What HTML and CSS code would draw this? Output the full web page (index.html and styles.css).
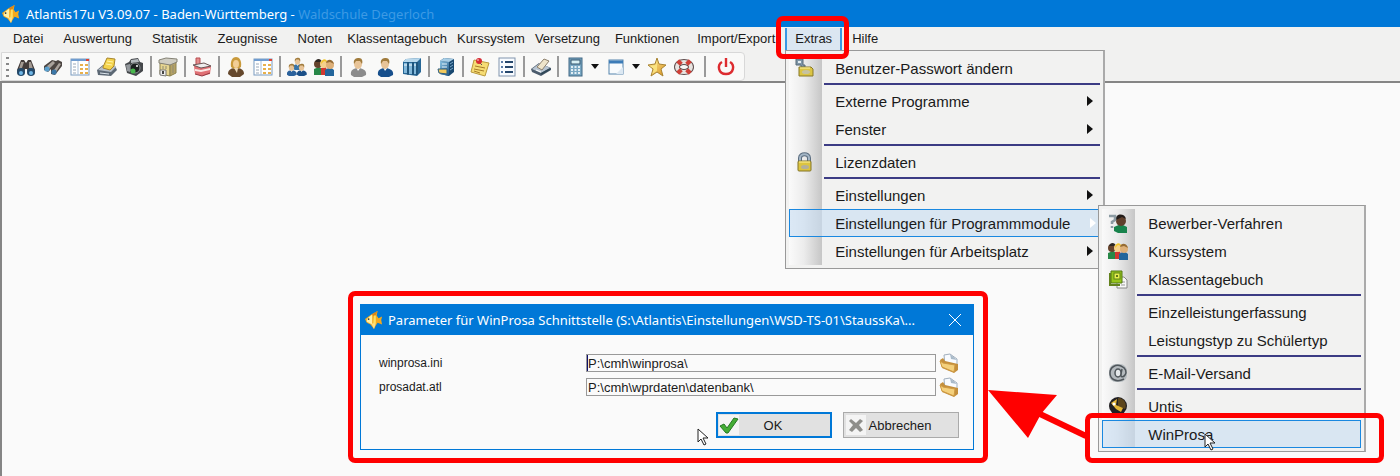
FILE: index.html
```html
<!DOCTYPE html>
<html lang="de">
<head>
  <meta charset="UTF-8">
  <title>Atlantis17u</title>
  <link rel="stylesheet" href="styles.css">
</head>
<body>
  <!-- shared icons -->
  <svg class="icon-defs" width="0" height="0" aria-hidden="true">
    <defs>
      <linearGradient id="gold" x1="0" y1="0" x2="1" y2="1">
        <stop offset="0" stop-color="#fff2a0"/>
        <stop offset="1" stop-color="#d9901c"/>
      </linearGradient>
      <linearGradient id="blue" x1="0" y1="0" x2="1" y2="1">
        <stop offset="0" stop-color="#8cc4e4"/>
        <stop offset="1" stop-color="#1c5484"/>
      </linearGradient>
      <symbol id="fish" viewBox="0 0 20 20">
        <path d="M0 9L7 4L14 0L13 5L15 8L19 6L18 10L19 15L14 13L12 16L10 20L6 15L2 13Z" fill="#f4a91c"/>
        <path d="M7 4L14 0L11 6Z" fill="#d8861a"/>
        <path d="M2 9L8 4L8 15L2 12Z" fill="#fff0a8"/>
        <path d="M10 5L12 5L12 14L9 15Z" fill="#ffdf60"/>
        <path d="M7 14L10 20L12 14Z" fill="#fbe08a"/>
        <circle cx="4" cy="9" r="1" fill="#333"/>
      </symbol>
      <symbol id="person" viewBox="0 0 20 20">
        <path d="M3 18C2 13 6 11 10 11S19 13 18 18L14 20H6Z" fill="currentColor"/>
        <path d="M8 10L10 14L13 10Z" fill="#fff"/>
        <ellipse cx="10" cy="7" rx="4" ry="5" fill="#e8c498"/>
        <path d="M6 7C5 2 8 1 11 1S15 4 14 7L12 4L8 4Z" fill="#a07b3c"/>
      </symbol>
      <symbol id="binoculars" viewBox="0 0 20 20">
        <path d="M5 3L8 3L10 6L12 3L15 3L19 13L18 18L12 18L11 12L9 12L8 18L2 18L1 13Z" fill="#443c3a"/>
        <path d="M5 5L8 5L6 11L3 12ZM13 5L15 5L17 12L13 11Z" fill="#a39a92"/>
        <circle cx="5" cy="15" r="4" fill="#24496a"/>
        <circle cx="15" cy="15" r="4" fill="#24496a"/>
        <circle cx="5" cy="16" r="2" fill="#6fb6e6"/>
        <circle cx="15" cy="16" r="2" fill="#6fb6e6"/>
      </symbol>
      <symbol id="binoculars-tilt" viewBox="0 0 20 20">
        <path d="M1 9L9 3L13 4L15 3L19 5L19 9L12 18L8 17L8 12L5 15L1 13Z" fill="#4c4642"/>
        <path d="M4 9L10 4L12 6L6 12ZM11 13L16 6L18 7L13 15Z" fill="#aaa39c"/>
        <circle cx="4" cy="12" r="2.6" fill="#5b9fcc"/>
        <circle cx="11" cy="15" r="2.6" fill="#3c78a8"/>
      </symbol>
      <symbol id="form" viewBox="0 0 20 20">
        <rect x="1" y="2" width="18" height="16" fill="#fff" stroke="#7b9cc0"/>
        <path d="M1 3H19" stroke="#6f9cd0" stroke-width="2"/>
        <path d="M16 3H19" stroke="#e04030" stroke-width="2"/>
        <path d="M8 4V18" stroke="#aac0d8"/>
        <path d="M3 7H6M3 10H6M3 13H6M3 16H6" stroke="#9aa8b8"/>
        <path d="M10 8H13M15 8H18M10 12H13M15 12H18M10 16H13M15 16H18" stroke="#e8b04c" stroke-width="2"/>
      </symbol>
      <symbol id="printer" viewBox="0 0 20 20">
        <path d="M0 13L6 8L18 9L20 13L14 19L1 18Z" fill="#5c6874"/>
        <path d="M1 13L14 15L19 10L18 9L7 8Z" fill="#b6bec8"/>
        <path d="M6 10L10 1L18 2L17 9L13 13L6 11Z" fill="#f4d34c" stroke="#a8862c"/>
        <path d="M10 4L16 5M9 7L15 8" stroke="#fff3a8"/>
        <path d="M3 16L12 17" stroke="#dfe7ee"/>
      </symbol>
      <symbol id="camera" viewBox="0 0 20 20">
        <path d="M1 7L5 5L7 2L14 1L16 5L19 6L19 14L12 19L3 16Z" fill="#45484b"/>
        <path d="M7 3L14 2L15 5L7 6Z" fill="#b5babe"/>
        <path d="M2 8L6 7L6 15L3 14Z" fill="#94999d"/>
        <circle cx="11" cy="11" r="5" fill="#1c1f20" stroke="#8a8f92"/>
        <circle cx="9" cy="14" r="2.5" fill="#48b84c"/>
        <circle cx="13" cy="9" r="1" fill="#fff"/>
      </symbol>
      <symbol id="school" viewBox="0 0 20 20">
        <path d="M2 6L12 7L12 19L2 17Z" fill="#e6d590" stroke="#8d8350"/>
        <path d="M12 7L18 5V16L12 19Z" fill="#b5a266" stroke="#8d8350"/>
        <path d="M1 3L8 1L19 2V5L12 8L1 6Z" fill="#d0cec4" stroke="#858275"/>
        <path d="M5 9V12M8 9V12M15 8V16" stroke="#8f8b74"/>
        <path d="M2 13H8V19L2 18Z" fill="#eee" stroke="#777"/>
        <path d="M5 14V17" stroke="#444" stroke-width="2"/>
      </symbol>
      <symbol id="factory" viewBox="0 0 20 20">
        <path d="M4 1H8V9H4Z" fill="#e48c8c" stroke="#b84c50"/>
        <path d="M2 9L14 7L19 9L18 17L10 19L3 17Z" fill="#e07074"/>
        <path d="M1 8L12 6L19 9L9 11Z" fill="#eee" stroke="#6b5555"/>
        <path d="M3 12L9 13L18 11V13L9 15L3 14Z" fill="#fbe9e6"/>
        <path d="M3 17L10 19L18 16" fill="none" stroke="#943840"/>
      </symbol>
      <symbol id="woman" viewBox="0 0 20 20">
        <path d="M2 17C2 12 6 11 10 11S18 12 18 17L14 20H6Z" fill="#65482c"/>
        <path d="M5 10C4 3 7 0 10 0S16 3 15 10L12 12H8Z" fill="#c99a3c"/>
        <ellipse cx="10" cy="7" rx="3" ry="4" fill="#f2ce96"/>
        <path d="M8 11H12L11 16Z" fill="#ead8b8"/>
      </symbol>
      <symbol id="group" viewBox="0 0 20 20">
        <use href="#person" x="4" y="0" width="13" height="13" color="#3874a8"/>
        <use href="#person" x="-2" y="6" width="13" height="13" color="#2c629c"/>
        <use href="#person" x="8" y="6" width="13" height="13" color="#1c5088"/>
      </symbol>
      <symbol id="trio" viewBox="0 0 20 20">
        <path d="M0 18V12L5 10L10 13V18Z" fill="#288848"/>
        <path d="M7 18V11L12 10L14 18Z" fill="#d03830"/>
        <path d="M11 19V13L16 10L20 13V19Z" fill="#23669c"/>
        <circle cx="4" cy="7" r="4" fill="#66432c"/>
        <path d="M1 5C2 1 7 1 8 5Z" fill="#2c2622"/>
        <circle cx="10" cy="7" r="4" fill="#f5d18b"/>
        <path d="M7 7C7 1 13 1 13 5L10 4Z" fill="#f2c62c"/>
        <circle cx="16" cy="8" r="4" fill="#deb078"/>
        <path d="M12 6C13 1 19 2 20 7L16 5Z" fill="#966c34"/>
      </symbol>
      <symbol id="books" viewBox="0 0 20 20">
        <path d="M1 5L4 2L19 1V15L15 19L1 17Z" fill="#276796"/>
        <path d="M1 5L4 2L19 1L15 5Z" fill="#b8d8ec"/>
        <path d="M2 6H5V16H2ZM7 6H10V17H7ZM12 6H14V17H12Z" fill="#82b8da"/>
        <path d="M6 5V18M11 5V18M15 5V18" stroke="#164464"/>
        <path d="M2 8H5M7 8H10M12 8H14" stroke="#f1f6fa"/>
      </symbol>
      <symbol id="cabinet" viewBox="0 0 20 20">
        <path d="M4 4L8 1L18 2V15L13 19L4 17Z" fill="#194870"/>
        <path d="M4 4L13 5V19L4 17Z" fill="url(#blue)"/>
        <path d="M4 4L8 1L18 2L13 5Z" fill="#a8cee6"/>
        <path d="M6 7H11M6 10H11" stroke="#e4f2fa"/>
        <path d="M2 12L11 12V17L3 16Z" fill="#f2c95c" stroke="#2b5c80"/>
        <path d="M14 7L17 5M14 10L17 8M14 13L17 11" stroke="#7daccc"/>
      </symbol>
      <symbol id="note" viewBox="0 0 20 20">
        <path d="M4 3L19 6L15 19L1 15Z" fill="#f6dc74" stroke="#b99a3c"/>
        <path d="M5 9L15 11M4 12L14 14M4 14L10 16" stroke="#a87d28"/>
        <path d="M9 5L12 8" stroke="#555"/>
        <circle cx="9" cy="4" r="3" fill="#d52c34"/>
        <circle cx="8" cy="3" r="1" fill="#f69898"/>
      </symbol>
      <symbol id="list" viewBox="0 0 20 20">
        <rect x="2" y="1" width="16" height="18" fill="#f8fbff" stroke="#8295ad"/>
        <path d="M8 5H16M8 10H16M8 15H16" stroke="#26476c" stroke-width="2"/>
        <path d="M4 5H6M4 10H6M4 15H6" stroke="#5a7ca8" stroke-width="2"/>
      </symbol>
      <symbol id="scanner" viewBox="0 0 20 20">
        <path d="M0 12L8 6L20 11V13L10 19L1 15Z" fill="#4c5c6c"/>
        <path d="M1 12L9 6L19 11L10 16Z" fill="#b8c5d2"/>
        <path d="M6 10L13 2L18 4L11 13Z" fill="#eee4ca" stroke="#8d806d"/>
        <path d="M10 17L19 12" stroke="#304858" stroke-width="2"/>
        <path d="M5 13L10 15" stroke="#fff"/>
      </symbol>
      <symbol id="calculator" viewBox="0 0 20 20">
        <rect x="4" y="1" width="13" height="18" fill="#79a7c2" stroke="#426984"/>
        <rect x="6" y="3" width="9" height="4" fill="#d8f0f4" stroke="#35546c"/>
        <path d="M6 10H15M6 13H15M6 16H15" stroke="#e2eef4" stroke-width="2" stroke-dasharray="2 1.5"/>
      </symbol>
      <symbol id="window" viewBox="0 0 20 20">
        <rect x="3" y="3" width="14" height="14" fill="#f8fbfd" stroke="#5584ac"/>
        <path d="M3 5H17" stroke="#3c7cb8" stroke-width="3"/>
        <path d="M10 17L17 10V17Z" fill="#dce8f2"/>
      </symbol>
      <symbol id="star" viewBox="0 0 20 20">
        <path d="M10 1L12 7L19 8L14 12L16 19L10 15L4 19L6 12L1 8L8 7Z" fill="url(#gold)" stroke="#a88432"/>
        <path d="M10 3V14L5 17L7 12L3 9L9 8Z" fill="#fff08c" opacity=".7"/>
      </symbol>
      <symbol id="lifebuoy" viewBox="0 0 20 20">
        <ellipse cx="10" cy="10" rx="7" ry="5" fill="none" stroke="#5e4c4c" stroke-width="6"/>
        <ellipse cx="10" cy="10" rx="7" ry="5" fill="none" stroke="#e8e4e0" stroke-width="4"/>
        <path d="M4 7L7 4M13 4L16 7M16 13L13 16M7 16L4 13" stroke="#cf4038" stroke-width="5"/>
      </symbol>
      <symbol id="power" viewBox="0 0 20 20">
        <path d="M6 5C1 8 2 17 10 17S19 8 14 5" fill="none" stroke="#dd2c30" stroke-width="2.4"/>
        <path d="M10 1V10" stroke="#dd2c30" stroke-width="2.4"/>
      </symbol>
      <symbol id="lock" viewBox="0 0 20 20">
        <path d="M5 11V6C5 1 14 1 14 6V11" fill="none" stroke="#5c6e80" stroke-width="4"/>
        <path d="M5 10V6C5 1 14 1 14 6V10" fill="none" stroke="#a4b6c6" stroke-width="2"/>
        <rect x="3" y="9" width="13" height="10" rx="1" fill="#dcc440" stroke="#837526"/>
        <path d="M4 10H15" stroke="#fff29c"/>
        <ellipse cx="10" cy="15" rx="4" ry="2" fill="#b4b09a"/>
      </symbol>
      <symbol id="lock-key" viewBox="0 0 20 20">
        <path d="M1 1H8V7H10V10H6V7H1Z" fill="#7f96a8" stroke="#596b78"/>
        <rect x="3" y="3" width="3" height="2" fill="#e4edf2"/>
        <path d="M4 9H16L18 11V18H4Z" fill="#dbc444" stroke="#877829"/>
        <path d="M5 10H15" stroke="#fff29c"/>
        <ellipse cx="11" cy="14" rx="4" ry="2" fill="#c6c2a2"/>
      </symbol>
      <symbol id="applicant" viewBox="0 0 20 20">
        <path d="M6 18V14L13 11L19 14V20H10Z" fill="#18834c"/>
        <circle cx="13" cy="8" r="5" fill="#60402c"/>
        <path d="M8 7C7 0 17 0 18 6L14 4Z" fill="#211b18"/>
        <path d="M1 3H7V7L4 9V11M4 13V15" fill="none" stroke="#8c9ba3" stroke-width="2.5"/>
      </symbol>
      <symbol id="classbook" viewBox="0 0 20 20">
        <path d="M9 8H16L19 11V19H9Z" fill="#f8f8f8" stroke="#888"/>
        <path d="M13 13H17M13 16H17" stroke="#999"/>
        <path d="M3 2H14V14H3Z" fill="#97c51c" stroke="#537914"/>
        <path d="M2 4V16H12" fill="none" stroke="#63821d" stroke-width="2"/>
        <rect x="6" y="4" width="6" height="6" fill="#e5ed4c" stroke="#5e8418"/>
        <circle cx="9" cy="7" r="1" fill="#354e0c"/>
      </symbol>
      <symbol id="at" viewBox="0 0 20 20">
        <rect x="1" y="1" width="18" height="18" rx="7" fill="#b4babe"/>
        <path d="M16 16C8 20 2 16 2 10S8 1 13 3S19 9 17 12S12 14 13 11L14 6" fill="none" stroke="#4f565b" stroke-width="1.5"/>
        <ellipse cx="10" cy="10" rx="3" ry="4" fill="#e4e8ea" stroke="#4f565b" stroke-width="1.5"/>
      </symbol>
      <symbol id="untis" viewBox="0 0 20 20">
        <circle cx="10" cy="10" r="9" fill="#211f22"/>
        <path d="M10 2C17 2 19 9 17 13L10 10Z" fill="#5b451c"/>
        <path d="M3 7L9 3L8 9L15 12L13 16L8 13Z" fill="#e2b436"/>
        <circle cx="6" cy="8" r="1.5" fill="#fff"/>
      </symbol>
      <symbol id="folder" viewBox="0 0 20 20">
        <path d="M5 2L11 1L18 6V17L6 12Z" fill="#f8fbff" stroke="#a0aebc"/>
        <path d="M11 1L12 6L18 7Z" fill="#a9bac9"/>
        <path d="M1 7L4 5L6 8L19 11V17L15 20L3 15Z" fill="#c48f3c"/>
        <path d="M1 8L4 10L16 12L15 19L3 14Z" fill="#f4d07c" stroke="#cf9a42"/>
      </symbol>
      <symbol id="check" viewBox="0 0 20 20">
        <path d="M1 11L5 9L8 13L15 3L19 4L9 18L7 18Z" fill="#44ad35" stroke="#267824"/>
      </symbol>
      <symbol id="cross" viewBox="0 0 20 20">
        <path d="M5 4L10 8L14 4L17 6L13 10L17 15L14 17L10 13L6 17L3 15L7 10L3 6Z" fill="#8e8e8a"/>
      </symbol>
      <symbol id="pointer" viewBox="0 0 12 18">
        <path d="M1 1V14L4 11L7 17L9 16L6 10H11Z" fill="#fff" stroke="#222"/>
      </symbol>
    </defs>
  </svg>

  <header class="titlebar">
    <svg class="fish"><use href="#fish"/></svg>
    <h1>Atlantis17u V3.09.07 - Baden-Württemberg - <span class="school">Waldschule Degerloch</span></h1>
  </header>

  <nav class="menubar">
    <ul>
      <li><button>Datei</button></li>
      <li><button>Auswertung</button></li>
      <li><button>Statistik</button></li>
      <li><button>Zeugnisse</button></li>
      <li><button>Noten</button></li>
      <li class="close"><button>Klassentagebuch</button></li>
      <li class="tight"><button>Kurssystem</button></li>
      <li class="tight"><button>Versetzung</button></li>
      <li class="close"><button>Funktionen</button></li>
      <li class="import"><button>Import/Export</button></li>
      <li>
        <button class="open">Extras</button>
        <div class="menu menu-extras">
          <button class="item"><svg class="icon"><use href="#lock-key"/></svg>Benutzer-Passwort ändern</button>
          <hr>
          <button class="item sub"><span class="icon"></span>Externe Programme</button>
          <button class="item sub"><span class="icon"></span>Fenster</button>
          <hr>
          <button class="item"><svg class="icon"><use href="#lock"/></svg>Lizenzdaten</button>
          <hr>
          <button class="item sub"><span class="icon"></span>Einstellungen</button>
          <div class="has-menu">
            <button class="item sub active"><span class="icon"></span>Einstellungen für Programmmodule</button>
            <div class="menu menu-module">
              <button class="item"><svg class="icon"><use href="#applicant"/></svg>Bewerber-Verfahren</button>
              <button class="item"><svg class="icon"><use href="#trio"/></svg>Kurssystem</button>
              <button class="item"><svg class="icon"><use href="#classbook"/></svg>Klassentagebuch</button>
              <hr>
              <button class="item"><span class="icon"></span>Einzelleistungerfassung</button>
              <button class="item"><span class="icon"></span>Leistungstyp zu Schülertyp</button>
              <hr>
              <button class="item"><svg class="icon"><use href="#at"/></svg>E-Mail-Versand</button>
              <hr>
              <button class="item"><svg class="icon"><use href="#untis"/></svg>Untis</button>
              <div class="has-menu">
                <button class="item active"><span class="icon"></span>WinProsa</button>
                <div class="mark mark-winprosa"></div>
                <svg class="pointer pointer-menu"><use href="#pointer"/></svg>
              </div>
            </div>
          </div>
          <button class="item sub"><span class="icon"></span>Einstellungen für Arbeitsplatz</button>
        </div>
        <div class="mark mark-extras"></div>
      </li>
      <li><button>Hilfe</button></li>
    </ul>
  </nav>

  <div class="toolrow">
    <div class="toolbar">
      <span class="grip"></span>
      <button aria-label="Suchen"><svg><use href="#binoculars"/></svg></button>
      <button aria-label="Weitersuchen"><svg><use href="#binoculars-tilt"/></svg></button>
      <button aria-label="Formular"><svg><use href="#form"/></svg></button>
      <button aria-label="Drucken"><svg><use href="#printer"/></svg></button>
      <button aria-label="Foto"><svg><use href="#camera"/></svg></button>
      <span class="sep"></span>
      <button aria-label="Schule"><svg><use href="#school"/></svg></button>
      <span class="sep"></span>
      <button aria-label="Betrieb"><svg><use href="#factory"/></svg></button>
      <span class="sep"></span>
      <button aria-label="Lehrer"><svg><use href="#woman"/></svg></button>
      <button aria-label="Lehrerliste"><svg><use href="#form"/></svg></button>
      <span class="sep"></span>
      <button aria-label="Klassen"><svg><use href="#group"/></svg></button>
      <button aria-label="Kurse"><svg><use href="#trio"/></svg></button>
      <span class="sep"></span>
      <button aria-label="Bewerber" class="gray"><svg><use href="#person"/></svg></button>
      <button aria-label="Schüler" class="navy"><svg><use href="#person"/></svg></button>
      <button aria-label="Bücher"><svg><use href="#books"/></svg></button>
      <span class="sep"></span>
      <button aria-label="Archiv"><svg><use href="#cabinet"/></svg></button>
      <span class="sep"></span>
      <button aria-label="Notiz"><svg><use href="#note"/></svg></button>
      <button aria-label="Liste"><svg><use href="#list"/></svg></button>
      <span class="sep"></span>
      <button aria-label="Scannen"><svg><use href="#scanner"/></svg></button>
      <span class="sep"></span>
      <button aria-label="Rechner"><svg><use href="#calculator"/></svg></button>
      <span class="caret"></span>
      <button aria-label="Fenster"><svg><use href="#window"/></svg></button>
      <span class="caret"></span>
      <button aria-label="Favoriten"><svg><use href="#star"/></svg></button>
      <button aria-label="Hilfe"><svg><use href="#lifebuoy"/></svg></button>
      <span class="sep wide"></span>
      <button aria-label="Beenden"><svg><use href="#power"/></svg></button>
    </div>
  </div>

  <main class="workspace">
    <section class="dialog-mark">
      <form class="dialog">
        <div class="dialog-title">
          <svg class="fish"><use href="#fish"/></svg>
          <h2>Parameter für WinProsa Schnittstelle (S:\Atlantis\Einstellungen\WSD-TS-01\StaussKa\...</h2>
          <button type="button" class="close-btn" aria-label="Schließen">
            <svg viewBox="0 0 12 12"><path d="M0 0L12 12M12 0L0 12" stroke="#fff"/></svg>
          </button>
        </div>
        <div class="dialog-body">
          <div class="field">
            <label for="winprosa">winprosa.ini</label>
            <input type="text" id="winprosa" class="focused" value="P:\cmh\winprosa\">
            <button type="button" class="browse" aria-label="Ordner wählen"><svg><use href="#folder"/></svg></button>
          </div>
          <div class="field">
            <label for="prosadat">prosadat.atl</label>
            <input type="text" id="prosadat" value="P:\cmh\wprdaten\datenbank\">
            <button type="button" class="browse" aria-label="Ordner wählen"><svg><use href="#folder"/></svg></button>
          </div>
          <div class="actions">
            <button type="button" class="btn default"><svg><use href="#check"/></svg><span>OK</span></button>
            <button type="button" class="btn"><svg><use href="#cross"/></svg><span>Abbrechen</span></button>
          </div>
        </div>
        <svg class="pointer pointer-dialog"><use href="#pointer"/></svg>
      </form>
    </section>
  </main>

  <!-- arrow from the menu entry to the dialog -->
  <svg class="arrow" viewBox="0 0 100 50">
    <path d="M98 46L52 24" stroke="#f00" stroke-width="6"/>
    <path d="M0 0L69 5L53 24L40 48Z" fill="#f00"/>
  </svg>
</body>
</html>
```
FILE: styles.css
```css
* {
  box-sizing: border-box;
}
body {
  margin: 0;
  min-height: 100vh;
  display: flex;
  flex-direction: column;
  position: relative;
  overflow: hidden;
  background-color: #fafafa;
  color: #1a1a1a;
  font-family: "Liberation Sans", Arial, sans-serif;
  font-size: 13px;
}
button {
  margin: 0;
  padding: 0;
  border: none;
  background: none;
  color: inherit;
  font: inherit;
}
svg {
  display: block;
}
.icon-defs {
  position: absolute;
}

/* title bar */
.titlebar {
  display: flex;
  align-items: center;
  gap: 6px;
  height: 27px;
  padding-left: 2px;
  background-color: #0078d7;
}
.fish {
  width: 18px;
  height: 18px;
  flex: none;
}
h1, h2 {
  margin: 0;
  color: #fff;
  font-family: "Noto Sans", "Open Sans", sans-serif;
  font-size: 13px;
  font-weight: normal;
  white-space: nowrap;
}
.school {
  color: #3d9ae4;
}

/* menu bar */
.menubar {
  background-color: #f1f1f0;
}
.menubar ul {
  display: flex;
  height: 25px;
  margin: 0;
  padding: 1px 0 2px 3px;
  list-style: none;
}
.menubar li {
  position: relative;
}
.menubar li > button {
  height: 22px;
  padding: 0 10px 2px;
}
.menubar .tight {
  margin-left: -10px;
}
.menubar .close {
  margin-left: -5px;
}
.menubar .import {
  margin-left: -2px;
}
.menubar li > .open {
  border: solid #3a97e4;
  border-width: 0 2px;
  padding: 0 8px 2px;
  background-color: #dbe6f1;
}

/* drop-down menus */
.menu {
  position: absolute;
  z-index: 2;
  padding: 3px;
  border: 1px solid #999;
  border-right: 2px solid #aaa;
  background: linear-gradient(to right, #fafafa, #ececec 45%, #c6c6c6) no-repeat content-box, #f2f2f1;
  background-size: 33px 100%, auto;
  font-size: 15px;
}
.menu-extras {
  top: 22px;
  left: 0;
  width: 320px;
}
.menu-module {
  top: -4px;
  left: 309px;
  width: 268px;
}
.has-menu {
  position: relative;
}
.item {
  display: flex;
  align-items: center;
  gap: 20px;
  width: 100%;
  height: 28px;
  padding: 0 6px 0 5px;
  border: 1px solid transparent;
  text-align: left;
  white-space: nowrap;
}
.item .icon {
  width: 20px;
  height: 20px;
  flex: none;
}
.item.active {
  border-color: #1a88e0;
  background-color: rgba(200, 222, 244, 0.6);
}
.item.sub::after {
  content: "";
  margin-left: auto;
  border: 5px solid transparent;
  border-left: 6px solid #111;
  border-right: none;
}
.item.sub.active::after {
  border-left-color: #fff;
}
.menu hr {
  height: 5px;
  margin: 0 0 0 35px;
  border: solid transparent;
  border-width: 1px 0 2px;
  background: #3c3c84 padding-box;
}

/* toolbar */
.toolrow {
  padding-left: 1px;
  background-color: #f1f1f0;
}
.toolbar {
  display: flex;
  align-items: center;
  gap: 7px;
  width: max-content;
  height: 29px;
  padding: 0 8px 0 4px;
  border: 1px solid #d8d8d8;
  border-radius: 0 4px 4px 0;
  background-color: #f9f9f8;
}
.toolbar svg {
  width: 20px;
  height: 20px;
}
.grip {
  width: 3px;
  height: 20px;
  background: repeating-linear-gradient(#888 0 2px, transparent 2px 6px);
}
.sep {
  width: 2px;
  height: 21px;
  margin: 0 -1px;
  background-color: #9a9a9a;
}
.sep.wide {
  margin: 0 3px;
}
.caret {
  margin-left: -1px;
  border: 4px solid transparent;
  border-top: 5px solid #111;
  border-bottom: none;
}
.gray {
  color: #8c8c8c;
}
.navy {
  color: #174f8c;
}

/* work area with the dialog */
.workspace {
  flex: 1;
  position: relative;
  border-top: 2px solid #858585;
  border-left: 2px solid #858585;
}
.dialog-mark {
  position: absolute;
  top: 208px;
  left: 346px;
  width: 640px;
  padding: 8px 9px 8px 7px;
  border: 5px solid #f00;
  border-radius: 7px;
}
.dialog {
  position: relative;
  border: 1px solid #0078d7;
}
.dialog-title {
  display: flex;
  align-items: center;
  gap: 5px;
  height: 30px;
  padding: 0 12px 0 4px;
  background-color: #0078d7;
}
.dialog-title h2 {
  flex: 1;
}
.close-btn svg {
  width: 12px;
  height: 12px;
}
.dialog-body {
  padding: 18px 14px 11px 18px;
}
.field {
  display: flex;
  align-items: center;
  height: 20px;
  margin-bottom: 4px;
}
.field label {
  width: 207px;
  font-size: 12px;
}
.field input {
  flex: 1;
  height: 18px;
  padding: 0 1px;
  border: 1px solid #999;
  background-color: #fafafa;
  color: #1a1a1a;
  font: inherit;
}
.field .focused {
  box-shadow: inset 1px 0 #10106c;
}
.browse {
  margin-left: 3px;
}
.browse svg {
  width: 20px;
  height: 20px;
}
.actions {
  display: flex;
  justify-content: flex-end;
  gap: 11px;
  margin-top: 15px;
}
.btn {
  display: flex;
  align-items: center;
  width: 116px;
  height: 26px;
  padding: 0 2px;
  border: 1px solid #aaa;
  background-color: #e1e1e1;
}
.btn svg {
  width: 20px;
  height: 20px;
  background-color: #f4f4f4;
}
.btn span {
  flex: 1;
  padding-right: 22px;
}
.btn.default {
  border: 2px solid #0078d7;
  padding: 0 1px;
}

/* red markers and mouse pointers */
.mark {
  position: absolute;
  z-index: 3;
  border: 5px solid #f00;
  border-radius: 7px;
  pointer-events: none;
}
.mark-extras {
  top: -12px;
  left: -9px;
  width: 73px;
  height: 43px;
}
.mark-winprosa {
  top: -7px;
  left: -17px;
  width: 299px;
  height: 50px;
}
.pointer {
  position: absolute;
  z-index: 4;
  width: 12px;
  height: 18px;
}
.pointer-menu {
  top: 13px;
  left: 102px;
}
.pointer-dialog {
  top: 123px;
  left: 336px;
}
.arrow {
  position: absolute;
  top: 390px;
  left: 988px;
  z-index: 5;
  width: 100px;
  height: 50px;
}
```
